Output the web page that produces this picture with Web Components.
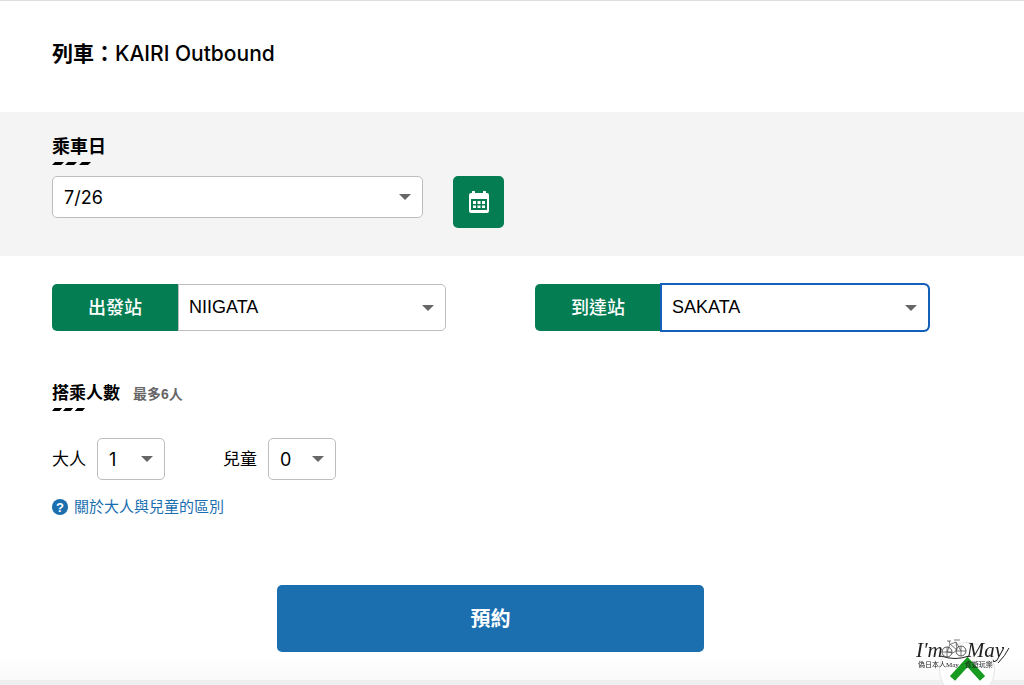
<!DOCTYPE html>
<html lang="zh-Hant">
<head>
<meta charset="utf-8">
<meta name="viewport" content="width=device-width, initial-scale=1">
<title>KAIRI Outbound</title>
<style>
body {
  margin: 0;
  background: #fff;
  color: #000;
  font-family: "Liberation Sans", "Noto Sans CJK TC", sans-serif;
}
</style>
</head>
<body>
<booking-page></booking-page>
<script>
const define = (name, html, setup) => {
  const template = document.createElement('template');
  template.innerHTML = html;
  customElements.define(name, class extends HTMLElement {
    constructor() {
      super();
      this.attachShadow({ mode: 'open' }).append(template.content.cloneNode(true));
    }
    connectedCallback() {
      if (setup) setup(this, this.shadowRoot);
    }
  });
};

define('select-box', `
<style>
  :host { display: block; position: relative; }
  select {
    appearance: none;
    display: block;
    box-sizing: border-box;
    width: 100%;
    height: var(--select-height, 42px);
    margin: 0;
    padding: var(--select-padding, 0 32px 0 11px);
    border: 1px solid #bdbdbd;
    border-radius: var(--select-radius, 5px);
    background: #fff;
    color: #000;
    font-family: var(--select-font, Inter, "Noto Sans CJK TC", sans-serif);
    font-size: 18px;
  }
  svg {
    position: absolute;
    right: 12px;
    top: 50%;
    width: 12px;
    height: 6px;
    margin-top: -3px;
    pointer-events: none;
  }
  :host([active]) select { border-color: #1460b8; outline: 2px solid #1460b8; outline-offset: -1px; }
</style>
<select></select>
<svg viewBox="0 0 12 6" aria-hidden="true"><path d="M0 0h12L6 6z" fill="#666"/></svg>
`, (host, root) => {
  const select = root.querySelector('select');
  select.setAttribute('aria-label', host.getAttribute('label'));
  select.replaceChildren(new Option(host.getAttribute('value')));
});

define('section-title', `
<style>
  :host { display: block; }
  .row { display: flex; align-items: baseline; gap: 13px; }
  h2 { margin: 0; font-size: var(--title-size, 17px); line-height: 24px; font-weight: 700; }
  svg { display: block; width: var(--mark-width, 39px); height: 3px; margin-top: var(--mark-gap, 3px); }
  ::slotted(*) { font-size: 14px; line-height: 20px; color: #666; font-weight: 700; }
</style>
<div class="row"><h2></h2><slot></slot></div>
<svg viewBox="0 0 39 3" preserveAspectRatio="none" aria-hidden="true"><path d="M3 0h9l-3 3H0zM16 0h9l-3 3h-9zM30 0h9l-3 3h-9z"/></svg>
`, (host, root) => {
  root.querySelector('h2').textContent = host.getAttribute('heading');
});

define('calendar-button', `
<style>
  :host { display: block; }
  button {
    display: grid;
    place-items: center;
    width: 51px;
    height: 52px;
    padding: 0;
    border: 0;
    border-radius: 5px;
    background: #047d53;
  }
  svg { width: 20px; height: 22px; }
</style>
<button type="button" aria-label="日曆">
  <svg viewBox="0 0 20 22" aria-hidden="true">
    <path fill="#fff" fill-rule="evenodd" d="M3 1a1 1 0 0 1 3 0v1h8V1a1 1 0 0 1 3 0v1h1a2 2 0 0 1 2 2v16a2 2 0 0 1-2 2H2a2 2 0 0 1-2-2V4a2 2 0 0 1 2-2h1zM2 8v11h16V8z"/>
    <path fill="#fff" d="M4 10h3v3H4zM8.500 10h3v3h-3zM13 10h3v3h-3zM4 14.500h3v2.500H4zM8.500 14.500h3v2.500h-3zM13 14.500h3v2.500h-3z"/>
  </svg>
</button>
`);

define('station-field', `
<style>
  :host { display: grid; grid-template-columns: 126px 1fr; min-width: 0; }
  .name {
    display: grid;
    place-items: center;
    box-sizing: border-box;
    height: 47px;
    padding-bottom: 4px;
    border-radius: 5px 0 0 5px;
    background: #047d53;
    color: #fff;
    font-size: 18px;
    font-weight: 500;
  }
  select-box {
    --select-height: 47px;
    --select-radius: 0 5px 5px 0;
    --select-padding: 0 32px 2px 10px;
    --select-font: "Liberation Sans", "Noto Sans CJK TC", sans-serif;
  }
</style>
<span class="name"></span>
<select-box></select-box>
`, (host, root) => {
  const label = host.getAttribute('label');
  const box = root.querySelector('select-box');
  root.querySelector('.name').textContent = label;
  box.setAttribute('label', label);
  box.setAttribute('value', host.getAttribute('value'));
  box.toggleAttribute('active', host.hasAttribute('active'));
  box.remove();
  root.append(box);
});

define('count-field', `
<style>
  :host { display: flex; align-items: center; gap: 11px; font-size: 17px; }
  span { padding-bottom: 4px; }
  select-box { width: 68px; }
</style>
<span></span>
<select-box></select-box>
`, (host, root) => {
  const label = host.getAttribute('label');
  const box = root.querySelector('select-box');
  root.querySelector('span').textContent = label;
  box.setAttribute('label', label);
  box.setAttribute('value', host.getAttribute('value'));
  box.remove();
  root.append(box);
});

define('help-link', `
<style>
  :host { display: block; }
  a {
    display: inline-flex;
    align-items: center;
    gap: 6px;
    color: #1b6faf;
    font-size: 15px;
    line-height: 22px;
    text-decoration: none;
  }
  i {
    display: grid;
    place-items: center;
    width: 16px;
    height: 16px;
    border-radius: 50%;
    background: #1b6faf;
    color: #fff;
    font: 700 13px "Liberation Sans", sans-serif;
  }
</style>
<a href="#"><i>?</i><slot></slot></a>
`);

define('site-mark', `
<style>
  :host { display: block; position: fixed; right: 14px; bottom: 0; width: 96px; height: 46px; overflow: hidden; }
  a { position: absolute; left: 25px; top: 3px; width: 56px; height: 56px; box-sizing: border-box; border: 1px solid #e4e4e4; border-radius: 50%; background: #fffffff0; }
  a svg { position: absolute; left: 10px; top: 14px; width: 35px; height: 25px; }
  .brand { position: absolute; left: 2px; top: 0; right: 6px; display: flex; justify-content: space-between; font: italic 21px/22px "Liberation Serif", serif; color: #222; }
  .bike { position: absolute; left: 27px; top: 0; width: 27px; height: 19px; }
  .tag { position: absolute; left: 4px; top: 21px; font: 7px/10px "Liberation Serif", "Noto Sans CJK TC", serif; white-space: nowrap; color: #222; }
  .curl { position: absolute; left: 0; top: 0; width: 96px; height: 30px; }
</style>
<a href="#" aria-label="回到頂端"><svg viewBox="0 0 35 25" aria-hidden="true"><path d="M2.500 21.500L17.500 5L32.500 21.500" fill="none" stroke="#179b20" stroke-width="7"/></svg></a>
<div class="brand"><span>I'm</span><span>May</span></div>
<svg class="curl" viewBox="0 0 96 30" fill="none" stroke="#222" aria-hidden="true"><path d="M27 17q14 5 28 0M84 24Q91 17 95 9"/></svg>
<svg class="bike" viewBox="0 0 27 19" fill="none" stroke="#555" aria-hidden="true">
  <circle cx="6" cy="13" r="5"/><circle cx="20" cy="12" r="5"/>
  <path d="M6 13L9 5l7 6-4 3-6-1M9 5L8 2M6 2h4M20 12L15 3l-5 2M13 1h6M16 11l-1-8M6 8v10M1 13h10M20 7v10M15 12h10" stroke-width=".8"/>
</svg>
<span class="tag">偽日本人May · 食遊玩樂</span>
`);

define('booking-page', `
<style>
  :host { display: flex; flex-direction: column; min-height: 100vh; box-sizing: border-box; border-top: 1px solid #ddd; }
  header, .date, main { padding: 0 95px 0 52px; }
  header { padding-top: 37px; padding-bottom: 42px; }
  h1 { margin: 0; font: 500 21px/32px Inter, "Noto Sans CJK TC", sans-serif; }
  h1 b { font-weight: 700; }
  .date { box-sizing: border-box; height: 144px; padding-top: 23px; background: #f4f4f4; }
  .date section-title { --title-size: 18px; }
  .pick { display: grid; grid-template-columns: minmax(0, 371px) auto; gap: 30px; margin-top: 11px; align-items: start; }
  .stations { display: grid; grid-template-columns: 1fr 1fr; gap: 89px; padding-top: 28px; }
  .people { --mark-width: 33px; --mark-gap: 2px; margin-top: 51px; }
  .counts { display: flex; gap: 58px; margin-top: 27px; }
  help-link { margin-top: 16px; }
  main > button {
    display: block;
    width: 427px;
    max-width: 100%;
    height: 67px;
    margin: 67px auto 28px;
    padding: 0 0 2px;
    border: 0;
    border-radius: 5px;
    background: #1b6faf;
    color: #fff;
    font: 700 20px "Noto Sans CJK TC", sans-serif;
  }
  main { flex: 1; background: linear-gradient(to top, #fafafa, #fff 24px); }
  footer { height: 5px; background: #efefef; }
</style>
<header><h1><b>列車：</b>KAIRI Outbound</h1></header>
<section class="date">
  <section-title heading="乘車日"></section-title>
  <div class="pick">
    <select-box label="乘車日" value="7/26"></select-box>
    <calendar-button></calendar-button>
  </div>
</section>
<main>
  <div class="stations">
    <station-field label="出發站" value="NIIGATA"></station-field>
    <station-field label="到達站" value="SAKATA" active></station-field>
  </div>
  <section-title class="people" heading="搭乘人數"><span>最多6人</span></section-title>
  <div class="counts">
    <count-field label="大人" value="1"></count-field>
    <count-field label="兒童" value="0"></count-field>
  </div>
  <help-link>關於大人與兒童的區別</help-link>
  <button type="button">預約</button>
</main>
<footer></footer>
<site-mark></site-mark>
`);
</script>
</body>
</html>
